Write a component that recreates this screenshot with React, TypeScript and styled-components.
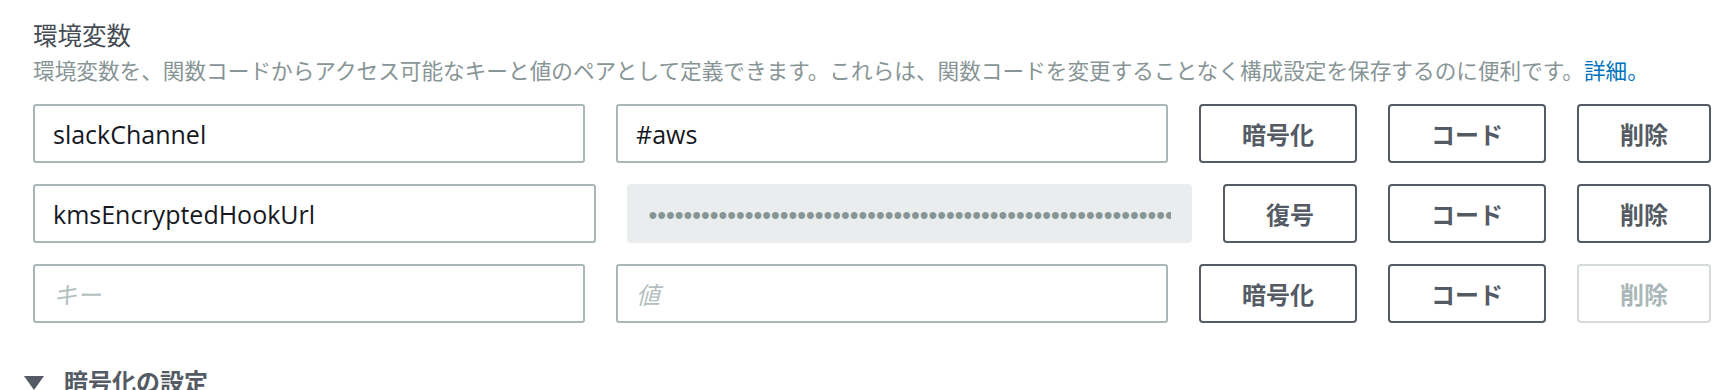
import React from 'react';
import styled, { createGlobalStyle } from 'styled-components';

const GlobalStyle = createGlobalStyle`
  html, body {
    margin: 0;
    padding: 0;
    background: #ffffff;
  }
  body {
    font-family: "Noto Sans CJK JP", "Open Sans", sans-serif;
  }
`;

const Page = styled.div`
  box-sizing: border-box;
  height: 390px;
  overflow: hidden;
  padding: 23px 25px 0 33px;
`;

const Title = styled.h2`
  margin: 0;
  font-family: "Noto Sans CJK JP", sans-serif;
  font-size: 24.5px;
  line-height: 24px;
  font-weight: 400;
  color: #444b54;
`;

const Description = styled.p`
  margin: 12px 0 0;
  font-family: "Noto Sans CJK JP", sans-serif;
  font-size: 21.65px;
  line-height: 21.3px;
  color: #879596;
  white-space: nowrap;
`;

const Link = styled.a`
  color: #0073bb;
  text-decoration: none;
`;

const Rows = styled.div`
  display: flex;
  flex-direction: column;
  gap: 21px;
  margin-top: 24px;
`;

const Row = styled.div`
  display: flex;
  gap: 31px;
  height: 59px;
`;

const TextInput = styled.input`
  flex: 1 1 0;
  min-width: 0;
  box-sizing: border-box;
  height: 59px;
  margin: 0;
  border: 2px solid #aab7b8;
  border-radius: 3px;
  padding: 0 18px;
  background: #ffffff;
  font-family: "Open Sans", "Noto Sans CJK JP", sans-serif;
  font-size: 25px;
  color: #16191f;
  outline: none;

  &::placeholder {
    font-family: "Noto Sans CJK JP", sans-serif;
    font-size: 24px;
    font-style: italic;
    color: #b4bfc0;
  }
`;

const MaskedValue = styled.div`
  flex: 1 1 0;
  min-width: 0;
  box-sizing: border-box;
  height: 59px;
  display: flex;
  align-items: center;
  padding: 4px 21px 0 22px;
  border-radius: 4px;
  background: #eaeded;
`;

const Dots = styled.div`
  flex: 1;
  overflow: hidden;
  white-space: nowrap;
  font-family: "Liberation Sans", sans-serif;
  font-size: 25px;
  line-height: 25px;
  color: #879596;
`;

const Button = styled.button<{ $disabled?: boolean }>`
  flex: 0 0 auto;
  box-sizing: border-box;
  height: 59px;
  margin: 0;
  padding: 0 41px;
  border: 2px solid ${(p) => (p.$disabled ? '#d5dbdb' : '#545b64')};
  border-radius: 4px;
  background: #ffffff;
  font-family: "Noto Sans CJK JP", sans-serif;
  font-size: 24px;
  font-weight: 700;
  line-height: 1;
  color: ${(p) => (p.$disabled ? '#aab7b8' : '#545b64')};
  cursor: ${(p) => (p.$disabled ? 'default' : 'pointer')};
`;

const SectionHeader = styled.div`
  display: flex;
  align-items: center;
  gap: 20px;
  margin: 46px 0 0 -9px;
  font-family: "Noto Sans CJK JP", sans-serif;
  font-size: 24px;
  line-height: 24px;
  font-weight: 700;
  color: #545b64;
`;

const Caret = styled.svg`
  flex: 0 0 auto;
  margin-top: 3px;
`;

const bullets = '•'.repeat(61);

export default function App() {
  return (
    <>
      <GlobalStyle />
      <Page>
        <Title>環境変数</Title>
        <Description>
          環境変数を、関数コードからアクセス可能なキーと値のペアとして定義できます。これらは、関数コードを変更することなく構成設定を保存するのに便利です。
          <Link href="#">詳細。</Link>
        </Description>
        <Rows>
          <Row>
            <TextInput defaultValue="slackChannel" />
            <TextInput defaultValue="#aws" />
            <Button>暗号化</Button>
            <Button>コード</Button>
            <Button>削除</Button>
          </Row>
          <Row>
            <TextInput defaultValue="kmsEncryptedHookUrl" />
            <MaskedValue>
              <Dots>{bullets}</Dots>
            </MaskedValue>
            <Button>復号</Button>
            <Button>コード</Button>
            <Button>削除</Button>
          </Row>
          <Row>
            <TextInput placeholder="キー" />
            <TextInput placeholder="値" />
            <Button>暗号化</Button>
            <Button>コード</Button>
            <Button $disabled disabled>
              削除
            </Button>
          </Row>
        </Rows>
        <SectionHeader>
          <Caret width="20" height="14" viewBox="0 0 20 14">
            <path d="M0 0 H20 L10 14 Z" fill="#545b64" />
          </Caret>
          暗号化の設定
        </SectionHeader>
      </Page>
    </>
  );
}
